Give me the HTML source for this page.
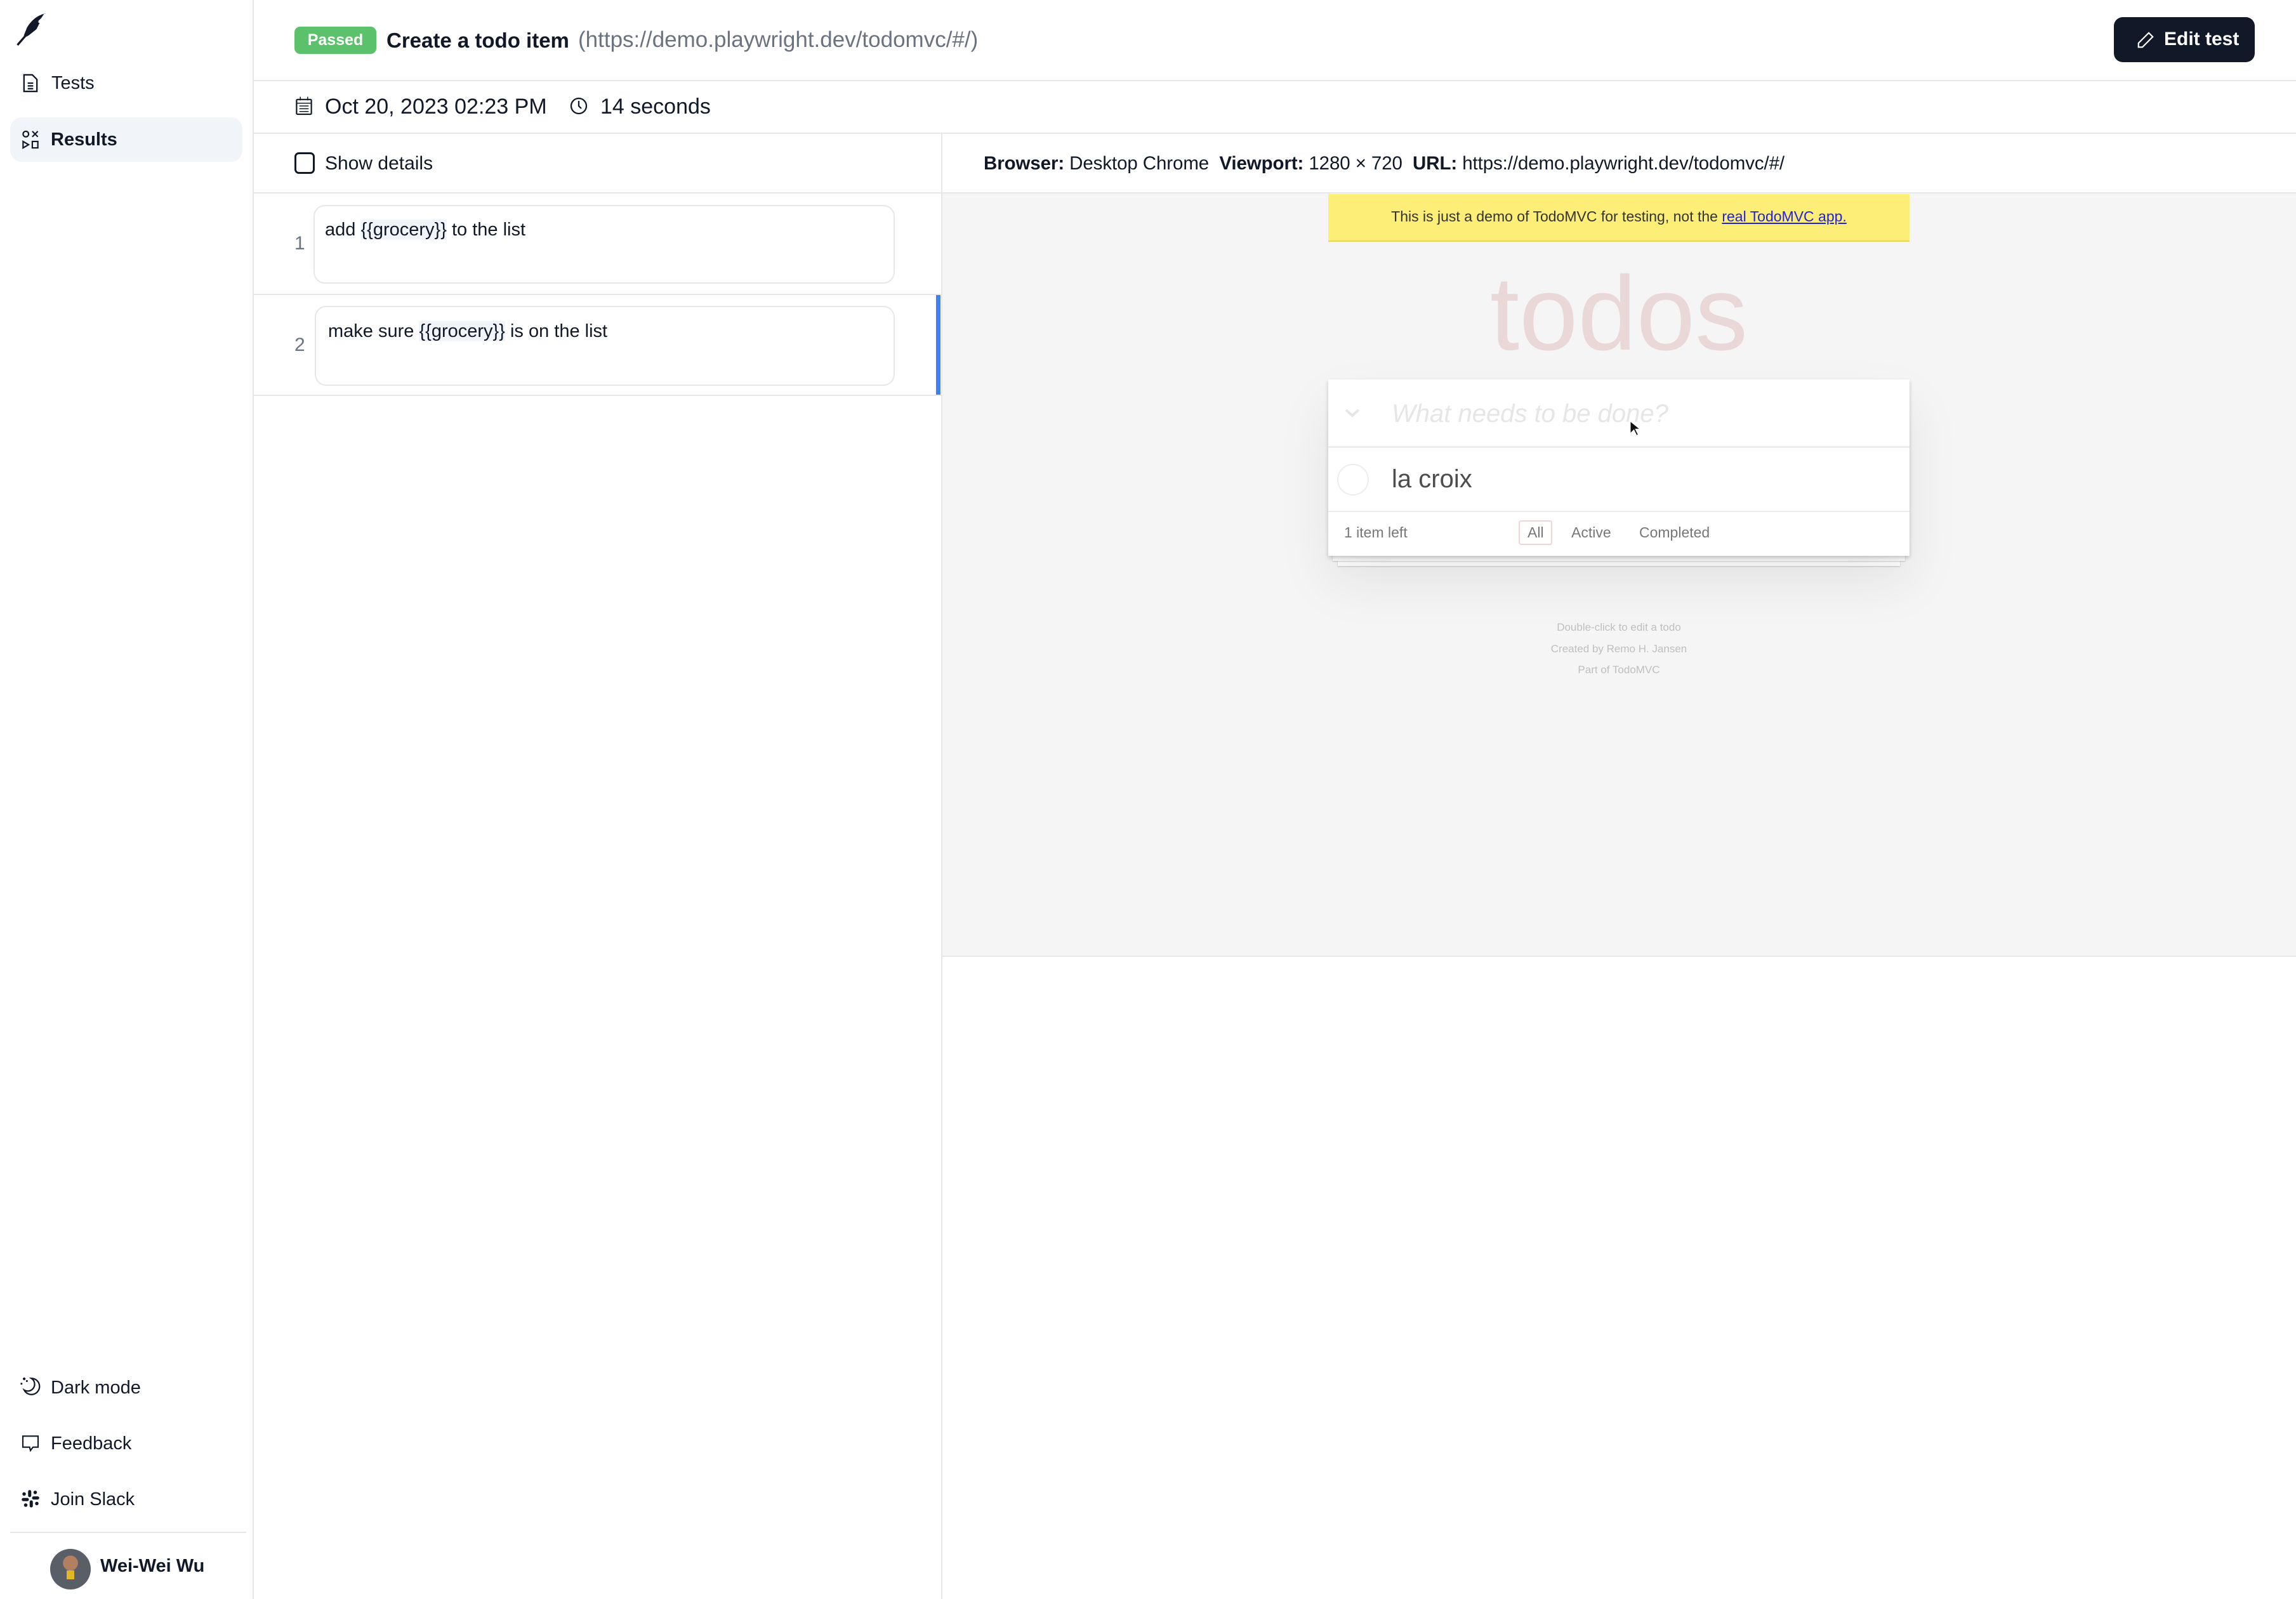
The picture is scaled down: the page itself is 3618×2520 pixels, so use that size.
<!DOCTYPE html>
<html><head><meta charset="utf-8"><style>
*{box-sizing:border-box;margin:0;padding:0}
body{width:3618px;height:2520px;position:relative;overflow:hidden;background:#fff;font-family:"Liberation Sans",Arial,sans-serif;color:#111827}
.a{position:absolute;white-space:nowrap}
.ln{position:absolute;background:#e5e7eb}
svg{position:absolute}
</style></head><body>
<!-- sidebar -->
<div class="ln" style="left:398px;top:0;width:2px;height:2520px"></div>
<svg style="left:20px;top:16px" width="60" height="60" viewBox="0 0 24 24"><path d="M21 2c-5 1-9 4-12 9l-2 5 1 1 2-1 5-4 2-4-2 0 3-3 2-3z" fill="#111827"/><path d="M16 7L3 22" stroke="#111827" stroke-width="1.3" fill="none"/></svg>
<svg style="left:33px;top:115px" width="30" height="32" viewBox="0 0 20 22" fill="none" stroke="#111827" stroke-width="1.6"><path d="M3 2h9l5 5v13H3z"/><path d="M7 11h6M7 14h6M7 17h6"/></svg>
<div class="a" style="left:81px;top:115px;font-size:29px">Tests</div>
<div class="a" style="left:16px;top:185px;width:366px;height:70px;background:#f1f5f9;border-radius:18px"></div>
<svg style="left:33px;top:204px" width="30" height="32" viewBox="0 0 20 22" fill="none" stroke="#111827" stroke-width="1.5"><circle cx="5" cy="5" r="3"/><path d="M12 2l6 6M18 2l-6 6M2 13v7l6-3.5zM12 13h6v7h-6z"/></svg>
<div class="a" style="left:80px;top:204px;font-size:29px;font-weight:bold">Results</div>
<svg style="left:31px;top:2168px" width="34" height="34" viewBox="0 0 24 24" fill="none" stroke="#111827" stroke-width="1.6"><path d="M13 3a9 9 0 1 1-8 13 7 7 0 0 0 8-13z"/><path d="M5 2v3M3.5 3.5h3M2 8v2M1 9h2M8 5v2M7 6h2"/></svg>
<div class="a" style="left:80px;top:2171px;font-size:29px">Dark mode</div>
<svg style="left:31px;top:2258px" width="34" height="32" viewBox="0 0 24 24" fill="none" stroke="#111827" stroke-width="1.6"><path d="M3 4h18v13h-6l-3 4-1-4H3z"/></svg>
<div class="a" style="left:80px;top:2259px;font-size:29px">Feedback</div>
<svg style="left:33px;top:2347px" width="30" height="30" viewBox="0 0 24 24" fill="#111827"><rect x="9" y="1" width="4" height="9" rx="2"/><rect x="14" y="9" width="9" height="4" rx="2"/><rect x="11" y="14" width="4" height="9" rx="2"/><rect x="1" y="11" width="9" height="4" rx="2"/><circle cx="18" cy="4" r="2.2"/><circle cx="20" cy="18" r="2.2"/><circle cx="6" cy="20" r="2.2"/><circle cx="4" cy="6" r="2.2"/></svg>
<div class="a" style="left:80px;top:2347px;font-size:29px">Join Slack</div>
<div class="ln" style="left:16px;top:2414px;width:372px;height:2px"></div>
<div class="a" style="left:79px;top:2441px;width:64px;height:64px;border-radius:50%;background:radial-gradient(circle at 50% 35%,#b08060 0 22%,#5a5e66 23% 100%);overflow:hidden"><div style="position:absolute;left:26px;top:34px;width:12px;height:14px;background:#e3b628"></div></div>
<div class="a" style="left:158px;top:2452px;font-size:29px;font-weight:bold">Wei-Wei Wu</div>

<!-- header -->
<div class="ln" style="left:400px;top:126px;width:3218px;height:2px"></div>
<div class="a" style="left:464px;top:42px;width:129px;height:43px;background:#5cc16b;border-radius:9px;color:#fff;font-size:25px;font-weight:bold;text-align:center;line-height:43px">Passed</div>
<div class="a" style="left:609px;top:45px;font-size:33px;font-weight:bold">Create a todo item</div>
<div class="a" style="left:911px;top:43px;font-size:35px;color:#6b7280">(https://demo.playwright.dev/todomvc/#/)</div>
<div class="a" style="left:3331px;top:27px;width:222px;height:71px;background:#111827;border-radius:14px"></div>
<svg style="left:3366px;top:48px" width="30" height="30" viewBox="0 0 24 24" fill="none" stroke="#fff" stroke-width="1.7"><path d="M16 3l5 5L8 21H3v-5z"/></svg>
<div class="a" style="left:3410px;top:45px;font-size:30px;color:#fff;font-weight:bold">Edit test</div>

<svg style="left:464px;top:151px" width="30" height="32" viewBox="0 0 20 22" fill="none" stroke="#111827" stroke-width="1.5"><rect x="2" y="4" width="16" height="16" rx="1"/><path d="M2 8h16M6 1v4M14 1v4M5 11h10M5 14h10M5 17h10" stroke-width="1"/></svg>
<div class="a" style="left:512px;top:149px;font-size:34px">Oct 20, 2023 02:23 PM</div>
<svg style="left:896px;top:151px" width="32" height="32" viewBox="0 0 24 24" fill="none" stroke="#111827" stroke-width="1.7"><circle cx="12" cy="12" r="9"/><path d="M12 6v6l3 3"/></svg>
<div class="a" style="left:946px;top:149px;font-size:34px">14 seconds</div>
<div class="ln" style="left:400px;top:209px;width:3218px;height:2px"></div>

<!-- left panel -->
<div class="ln" style="left:1483px;top:210px;width:2px;height:2310px"></div>
<div class="a" style="left:464px;top:240px;width:32px;height:34px;border:3px solid #111827;border-radius:7px"></div>
<div class="a" style="left:512px;top:241px;font-size:30px">Show details</div>
<div class="ln" style="left:400px;top:303px;width:1084px;height:2px"></div>
<div class="a" style="left:464px;top:367px;font-size:30px;color:#6b7280">1</div>
<div class="a" style="left:494px;top:323px;width:916px;height:124px;border:2px solid #e5e7eb;border-radius:18px"></div>
<div class="a" style="left:512px;top:346px;font-size:29px">add <span style="background:#f1f5f9">{{grocery}}</span> to the list</div>
<div class="ln" style="left:400px;top:463px;width:1084px;height:2px"></div>
<div class="a" style="left:464px;top:527px;font-size:30px;color:#6b7280">2</div>
<div class="a" style="left:496px;top:482px;width:914px;height:126px;border:2px solid #e5e7eb;border-radius:18px"></div>
<div class="a" style="left:517px;top:506px;font-size:29px">make sure <span style="background:#f1f5f9">{{grocery}}</span> is on the list</div>
<div class="a" style="left:1475px;top:465px;width:7px;height:158px;background:#3b82f6"></div>
<div class="ln" style="left:400px;top:622px;width:1084px;height:2px"></div>

<!-- right panel -->
<div class="a" style="left:1550px;top:241px;font-size:29.5px;letter-spacing:-0.1px"><b>Browser:</b> Desktop Chrome &nbsp;<b>Viewport:</b> 1280 × 720 &nbsp;<b>URL:</b> https://demo.playwright.dev/todomvc/#/</div>
<div class="ln" style="left:1485px;top:303px;width:2133px;height:2px"></div>
<div class="a" style="left:1485px;top:305px;width:2133px;height:1202px;background:#f5f5f5"></div>
<div class="ln" style="left:1485px;top:1506px;width:2133px;height:2px"></div>
<div class="a" style="left:2093px;top:306px;width:916px;height:75px;background:#fdee77;border-bottom:2px solid #e7d45a;text-align:center;font-size:23px;line-height:70px;color:#333">This is just a demo of TodoMVC for testing, not the <span style="color:#2222dd;text-decoration:underline">real TodoMVC app.</span></div>
<div class="a" style="left:2093px;top:370px;width:916px;text-align:center;font-size:166px;font-weight:100;color:#ead7d7;line-height:250px">todos</div>
<div class="a" style="left:2108px;top:878px;width:886px;height:14px;background:#fff;box-shadow:0 1px 2px rgba(0,0,0,.2)"></div>
<div class="a" style="left:2100px;top:872px;width:902px;height:12px;background:#fff;box-shadow:0 1px 2px rgba(0,0,0,.2)"></div>
<div class="a" style="left:2093px;top:598px;width:916px;height:278px;background:#fff;box-shadow:0 3px 6px rgba(0,0,0,.2),0 40px 80px rgba(0,0,0,.08)"></div>
<svg style="left:2118px;top:642px" width="26" height="18" viewBox="0 0 26 18"><path d="M3 4l10 9 10-9" stroke="#e6e6e6" stroke-width="4" fill="none"/></svg>
<div class="a" style="left:2193px;top:630px;font-size:40px;font-style:italic;color:#e6e6e6">What needs to be done?</div>
<div class="ln" style="left:2093px;top:703px;width:916px;height:3px;background:#ededed"></div>
<div class="a" style="left:2107px;top:731px;width:50px;height:50px;border:2px solid #ededed;border-radius:50%"></div>
<div class="a" style="left:2193px;top:733px;font-size:40px;color:#4d4d4d">la croix</div>
<div class="ln" style="left:2093px;top:805px;width:916px;height:2px;background:#ededed"></div>
<div class="a" style="left:2118px;top:826px;font-size:23px;color:#777">1 item left</div>
<div class="a" style="left:2393px;top:820px;width:53px;height:39px;border:2px solid rgba(175,47,47,.2);border-radius:4px"></div>
<div class="a" style="left:2407px;top:826px;font-size:23px;color:#777">All</div>
<div class="a" style="left:2476px;top:826px;font-size:23px;color:#777">Active</div>
<div class="a" style="left:2583px;top:826px;font-size:23px;color:#777">Completed</div>
<div class="a" style="left:2093px;top:972px;width:916px;text-align:center;font-size:17px;color:#bfbfbf;line-height:33.5px">Double-click to edit a todo<br>Created by Remo H. Jansen<br>Part of TodoMVC</div>
<svg style="left:2567px;top:662px" width="18" height="26" viewBox="0 0 12 18"><path d="M1 1v14l4-4 3 6 2-1-3-6h5z" fill="#111" stroke="#fff" stroke-width="1"/></svg>
</body></html>
